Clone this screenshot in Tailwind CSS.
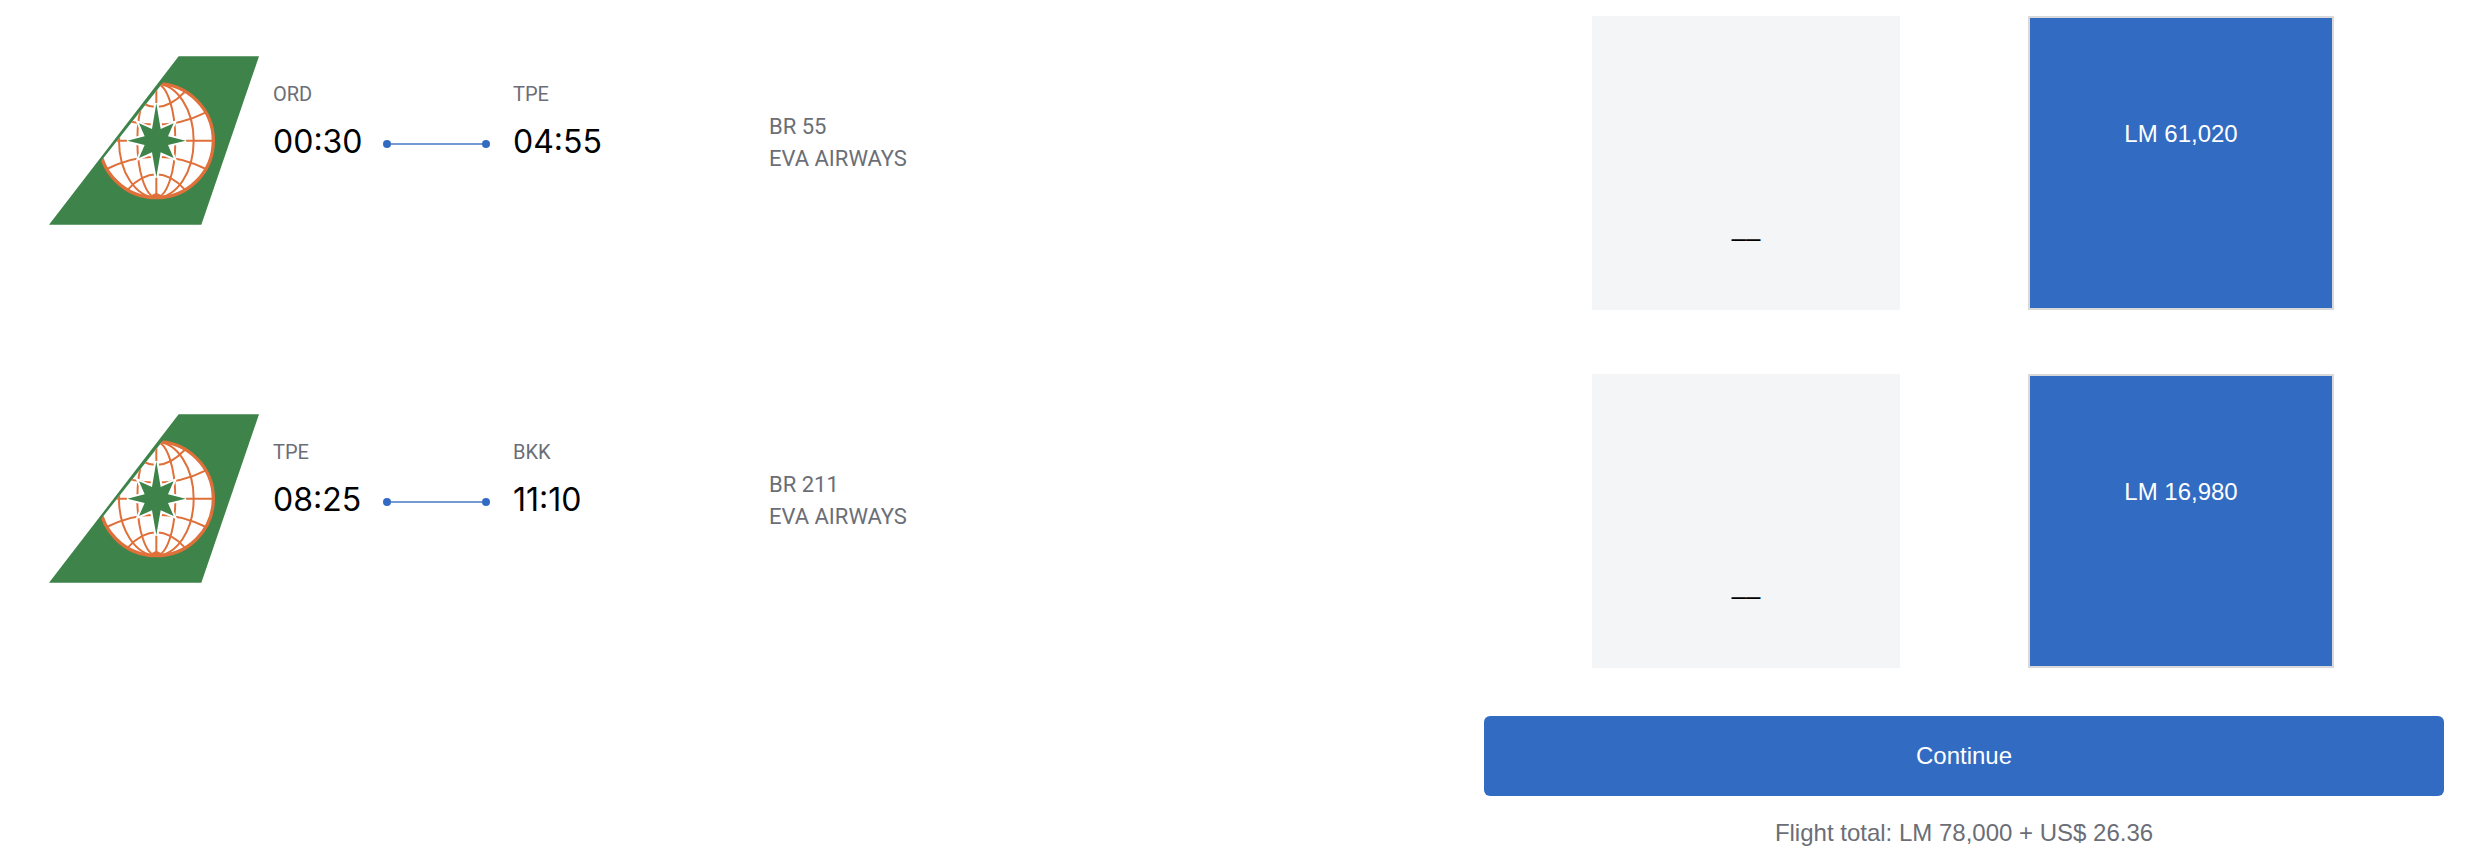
<!DOCTYPE html>
<html lang="en">
<head>
  <meta charset="UTF-8" />
  <meta name="viewport" content="width=device-width, initial-scale=1" />
  <title>Select flights</title>
  <script src="https://cdn.jsdelivr.net/npm/@tailwindcss/browser@4"></script>
</head>
<body class="bg-white font-['Liberation_Sans',Arial,sans-serif] text-black">
  <!-- Airline tail logo, reused by every segment -->
  <svg class="absolute size-0" aria-hidden="true">
    <defs>
      <clipPath id="tailEdge">
        <path d="M404 120 L700 120 V500 H104 Z" />
      </clipPath>
    </defs>
    <symbol id="tail" viewBox="56 48 630 507">
      <path d="M445 49 H686 L513 554 H56 Z" fill="#3d834a" />
      <g clip-path="url(#tailEdge)">
        <circle cx="378" cy="302" r="171" fill="#fff" />
        <g fill="none" stroke="#e0703a" stroke-width="6">
          <path d="M378 132 V472 M207 302 H549" />
          <ellipse cx="378" cy="302" rx="57" ry="170" />
          <ellipse cx="378" cy="302" rx="112" ry="170" />
          <path d="M229 217 Q378 291 527 217" />
          <path d="M229 387 Q378 313 527 387" />
          <path d="M293 156 Q378 246 463 156" />
          <path d="M293 448 Q378 358 463 448" />
          <circle cx="378" cy="302" r="171" stroke-width="10" />
        </g>
        <path d="M350 472 L378 458 L406 472 Z" fill="#e0703a" />
        <path d="M378 190 L391 267 L430 250 L413 289 L466 302 L413 315 L430 354 L391 337 L378 412 L365 337 L326 354 L343 315 L291 302 L343 289 L326 250 L365 267 Z" fill="#3d834a" stroke="#fff" stroke-width="12" paint-order="stroke" stroke-miterlimit="3" />
      </g>
    </symbol>
  </svg>

  <main class="pt-4 pb-3 pr-[30px]">
    <div class="flex flex-col gap-16">
      <!-- Segment 1 -->
      <section class="grid grid-cols-[1fr_960px]">
        <div class="flex items-start pl-[49px]">
          <svg class="mt-10 mr-[14px] h-[169px] w-[210px] shrink-0" role="img" aria-label="EVA Airways"><use href="#tail" /></svg>
          <div class="w-[110px] pt-[66px] font-[Roboto,sans-serif]">
            <p class="text-[20px] leading-6 text-[#6b6e76]">ORD</p>
            <p class="mt-4 font-[Inter,sans-serif] text-[32px] leading-10">00:30</p>
          </div>
          <div class="mt-[124px] flex w-[107px] items-center">
            <span class="size-2 rounded-full bg-[#326bc2]"></span>
            <span class="h-[2px] flex-1 bg-[#7499d5]"></span>
            <span class="size-2 rounded-full bg-[#326bc2]"></span>
          </div>
          <div class="ml-[23px] w-64 pt-[66px] font-[Roboto,sans-serif]">
            <p class="text-[20px] leading-6 text-[#6b6e76]">TPE</p>
            <p class="mt-4 font-[Inter,sans-serif] text-[32px] leading-10">04:55</p>
          </div>
          <div class="pt-[95px] font-[Roboto,sans-serif] text-[22px] leading-8 text-[#6b6e76]">
            <p>BR 55</p>
            <p>EVA AIRWAYS</p>
          </div>
        </div>
        <div class="flex gap-32 pl-[108px]">
          <div class="h-[294px] w-[308px] bg-[#f3f5f7] pt-[206px] text-center text-[26px] leading-8">––</div>
          <button type="button" class="flex h-[294px] w-[306px] cursor-pointer items-start justify-center border-2 border-[#d9d9d9] bg-[#326bc2] pt-[100px] text-[24px] leading-8 text-white">LM 61,020</button>
        </div>
      </section>

      <!-- Segment 2 -->
      <section class="grid grid-cols-[1fr_960px]">
        <div class="flex items-start pl-[49px]">
          <svg class="mt-10 mr-[14px] h-[169px] w-[210px] shrink-0" role="img" aria-label="EVA Airways"><use href="#tail" /></svg>
          <div class="w-[110px] pt-[66px] font-[Roboto,sans-serif]">
            <p class="text-[20px] leading-6 text-[#6b6e76]">TPE</p>
            <p class="mt-4 font-[Inter,sans-serif] text-[32px] leading-10">08:25</p>
          </div>
          <div class="mt-[124px] flex w-[107px] items-center">
            <span class="size-2 rounded-full bg-[#326bc2]"></span>
            <span class="h-[2px] flex-1 bg-[#7499d5]"></span>
            <span class="size-2 rounded-full bg-[#326bc2]"></span>
          </div>
          <div class="ml-[23px] w-64 pt-[66px] font-[Roboto,sans-serif]">
            <p class="text-[20px] leading-6 text-[#6b6e76]">BKK</p>
            <p class="mt-4 font-[Inter,sans-serif] text-[32px] leading-10">11:10</p>
          </div>
          <div class="pt-[95px] font-[Roboto,sans-serif] text-[22px] leading-8 text-[#6b6e76]">
            <p>BR 211</p>
            <p>EVA AIRWAYS</p>
          </div>
        </div>
        <div class="flex gap-32 pl-[108px]">
          <div class="h-[294px] w-[308px] bg-[#f3f5f7] pt-[206px] text-center text-[26px] leading-8">––</div>
          <button type="button" class="flex h-[294px] w-[306px] cursor-pointer items-start justify-center border-2 border-[#d9d9d9] bg-[#326bc2] pt-[100px] text-[24px] leading-8 text-white">LM 16,980</button>
        </div>
      </section>
    </div>

    <!-- Total -->
    <div class="mt-12 ml-auto w-[960px] text-center text-[24px] leading-8">
      <button type="button" class="h-20 w-full cursor-pointer rounded-md bg-[#326bc2] text-white hover:bg-[#2b5dab]">Continue</button>
      <p class="mt-[21px] text-[#6b6e76]">Flight total: LM 78,000 + US$ 26.36</p>
    </div>
  </main>
</body>
</html>
